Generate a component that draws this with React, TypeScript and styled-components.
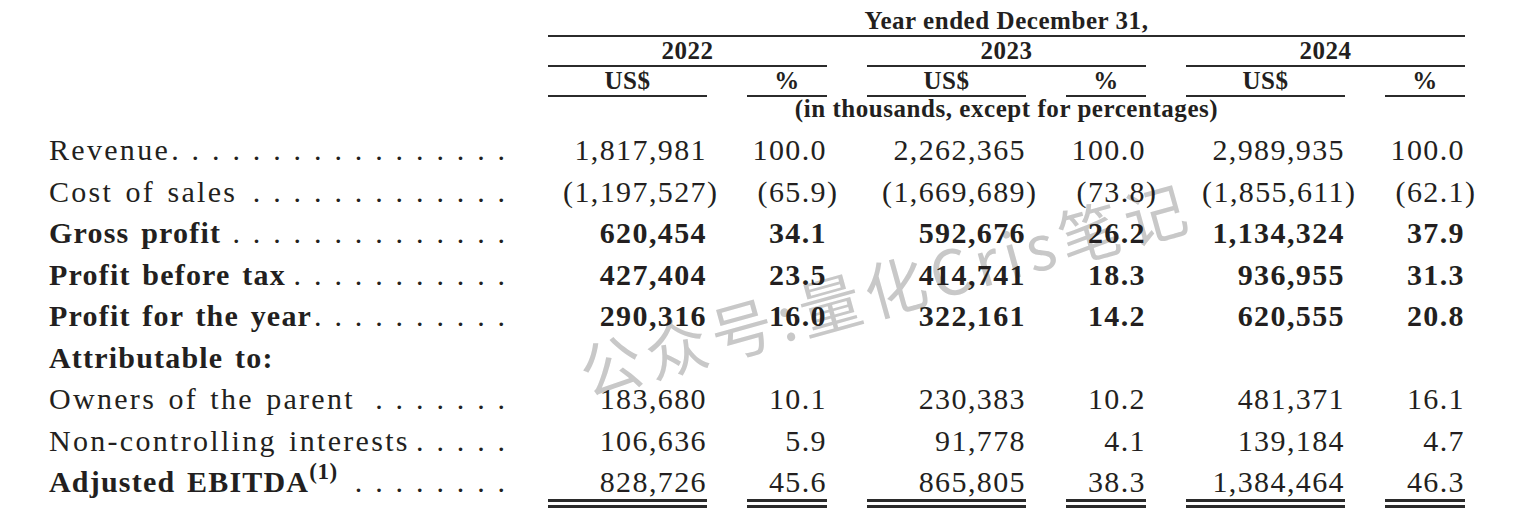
import React, { useLayoutEffect, useRef, useState } from "react";
import styled, { createGlobalStyle } from "styled-components";

const DOT_STEP = 20.4;

const GlobalStyle = createGlobalStyle`
  html, body {
    margin: 0;
    padding: 0;
    background: #ffffff;
  }
  body {
    font-family: "Liberation Serif", "Times New Roman", serif;
    color: #231f20;
  }
`;

const Page = styled.div`
  position: relative;
  width: 1524px;
  height: 521px;
  box-sizing: border-box;
  padding: 7px 0 0 49px;
  overflow: hidden;
`;

const Watermark = styled.span`
  position: absolute;
  left: 580px;
  top: 340px;
  z-index: 0;
  transform-origin: 0 50%;
  transform: rotate(-15.5deg);
  font-family: "Noto Sans CJK SC", "Noto Sans", sans-serif;
  font-size: 62px;
  line-height: 1;
  letter-spacing: 6px;
  color: #c8c8c8;
  white-space: nowrap;
`;

const Table = styled.div`
  position: relative;
  z-index: 1;
  display: grid;
  grid-template-columns: 459px repeat(3, 159px 80px);
  column-gap: 40px;
`;

const Blank = styled.div``;

const HeadCell = styled.div<{ $span?: number; $rule?: boolean; $tight?: boolean }>`
  grid-column: span ${(p) => p.$span ?? 1};
  font-size: 25px;
  font-weight: bold;
  letter-spacing: 0.55px;
  line-height: ${(p) => (p.$tight ? "24px" : "28px")};
  text-align: center;
  white-space: nowrap;
  border-bottom: ${(p) => (p.$rule ? "2px solid #2b2b2b" : "none")};
  margin-bottom: ${(p) => (p.$tight ? "8px" : "0")};
`;

const Label = styled.div<{ $bold?: boolean }>`
  display: flex;
  align-items: baseline;
  min-width: 0;
  font-size: 30px;
  line-height: 41.5px;
  font-weight: ${(p) => (p.$bold ? "bold" : "normal")};
  letter-spacing: ${(p) => (p.$bold ? "1.2px" : "2.3px")};
  word-spacing: ${(p) => (p.$bold ? "3px" : "2.5px")};
  white-space: nowrap;
`;

const Note = styled.sup`
  font-size: 23px;
  line-height: 0;
  vertical-align: 13px;
  letter-spacing: 0.5px;
`;

// each period carries its own gap as letter-spacing; the trailing gap hangs past the edge
const Dots = styled.span`
  flex: 1 1 0;
  min-width: 0;
  margin-right: -10px;
  text-align: right;
  white-space: nowrap;
  font-weight: normal;
  letter-spacing: 12.9px;
  word-spacing: 0;
`;

const Num = styled.div<{ $bold?: boolean; $total?: boolean }>`
  font-size: 30px;
  font-weight: ${(p) => (p.$bold ? "bold" : "normal")};
  letter-spacing: 1.4px;
  text-align: right;
  white-space: nowrap;
  line-height: ${(p) => (p.$total ? "34px" : "41.5px")};
  padding-top: ${(p) => (p.$total ? "3.5px" : "0")};
  border-bottom: ${(p) => (p.$total ? "9px double #2b2b2b" : "none")};
  align-self: start;
`;

const Hang = styled.span`
  margin-right: -0.38em;
`;

function Leader() {
  const ref = useRef<HTMLSpanElement>(null);
  const [count, setCount] = useState(0);
  useLayoutEffect(() => {
    if (ref.current) {
      const w = ref.current.getBoundingClientRect().width;
      setCount(Math.max(0, Math.floor(w / DOT_STEP)));
    }
  }, []);
  return <Dots ref={ref}>{".".repeat(count)}</Dots>;
}

function Value({ text, bold, total }: { text: string; bold?: boolean; total?: boolean }) {
  const neg = text.startsWith("(");
  return (
    <Num $bold={bold} $total={total}>
      {neg ? (
        <>
          {text.slice(0, -1)}
          <Hang>)</Hang>
        </>
      ) : (
        text
      )}
    </Num>
  );
}

interface Row {
  label: string;
  note?: string;
  bold?: boolean;
  boldNums?: boolean;
  leader?: boolean;
  total?: boolean;
  values: string[];
}

const rows: Row[] = [
  {
    label: "Revenue",
    leader: true,
    values: ["1,817,981", "100.0", "2,262,365", "100.0", "2,989,935", "100.0"],
  },
  {
    label: "Cost of sales",
    leader: true,
    values: ["(1,197,527)", "(65.9)", "(1,669,689)", "(73.8)", "(1,855,611)", "(62.1)"],
  },
  {
    label: "Gross profit",
    bold: true,
    boldNums: true,
    leader: true,
    values: ["620,454", "34.1", "592,676", "26.2", "1,134,324", "37.9"],
  },
  {
    label: "Profit before tax",
    bold: true,
    boldNums: true,
    leader: true,
    values: ["427,404", "23.5", "414,741", "18.3", "936,955", "31.3"],
  },
  {
    label: "Profit for the year",
    bold: true,
    boldNums: true,
    leader: true,
    values: ["290,316", "16.0", "322,161", "14.2", "620,555", "20.8"],
  },
  { label: "Attributable to:", bold: true, values: ["", "", "", "", "", ""] },
  {
    label: "Owners of the parent",
    leader: true,
    values: ["183,680", "10.1", "230,383", "10.2", "481,371", "16.1"],
  },
  {
    label: "Non-controlling interests",
    leader: true,
    values: ["106,636", "5.9", "91,778", "4.1", "139,184", "4.7"],
  },
  {
    label: "Adjusted EBITDA",
    note: "(1)",
    bold: true,
    leader: true,
    total: true,
    values: ["828,726", "45.6", "865,805", "38.3", "1,384,464", "46.3"],
  },
];

const years = ["2022", "2023", "2024"];

export default function App() {
  return (
    <>
      <GlobalStyle />
      <Page>
        <Watermark>公众号:量化Cris笔记</Watermark>
        <Table>
          <Blank />
          <HeadCell $span={6} $rule>
            Year ended December 31,
          </HeadCell>

          <Blank />
          {years.map((y) => (
            <HeadCell key={y} $span={2} $rule>
              {y}
            </HeadCell>
          ))}

          <Blank />
          {years.map((y) => (
            <React.Fragment key={y}>
              <HeadCell $rule>US$</HeadCell>
              <HeadCell $rule>%</HeadCell>
            </React.Fragment>
          ))}

          <Blank />
          <HeadCell $span={6} $tight>
            (in thousands, except for percentages)
          </HeadCell>

          {rows.map((r) => (
            <React.Fragment key={r.label}>
              <Label $bold={r.bold}>
                <span>
                  {r.label}
                  {r.note && <Note>{r.note}</Note>}
                </span>
                {r.leader && <Leader />}
              </Label>
              {r.values.map((v, i) => (
                <Value key={i} text={v} bold={r.boldNums} total={r.total} />
              ))}
            </React.Fragment>
          ))}
        </Table>
      </Page>
    </>
  );
}
